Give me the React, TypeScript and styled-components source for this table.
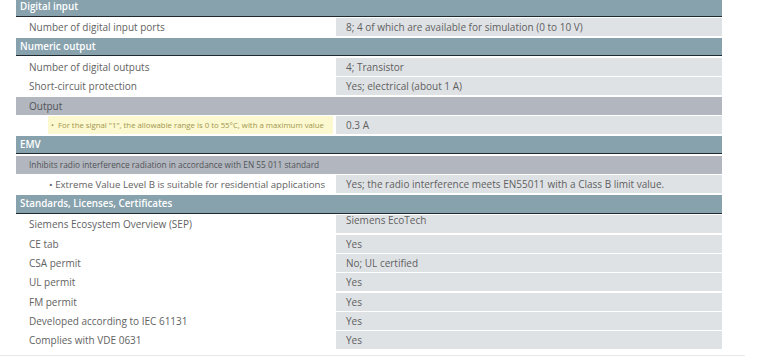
import React from "react";
import styled, { createGlobalStyle } from "styled-components";

const GlobalStyle = createGlobalStyle`
  html, body {
    margin: 0;
    padding: 0;
    background: #ffffff;
    overflow: hidden;
  }
  body {
    font-family: "Open Sans", "Noto Sans", "Liberation Sans", sans-serif;
  }
`;

const Page = styled.div`
  width: 759px;
  height: 357px;
  overflow: hidden;
`;

const Sheet = styled.div`
  margin-top: -2px;
  padding-bottom: 6px;
  width: 745px;
  border-bottom: 1px solid #e6e8ea;
`;

const Table = styled.div`
  margin-left: 16px;
  width: 706px;
  display: flex;
  flex-direction: column;
`;

const SectionHeader = styled.div<{ $first?: boolean }>`
  height: 17.5px;
  margin-top: ${(p) => (p.$first ? "0" : "2px")};
  background: #87a2ad;
  border-bottom: 1px solid #1f2a30;
  color: #ffffff;
  font-size: 9.8px;
  font-weight: 600;
  display: flex;
  align-items: center;
  padding-left: 4px;
  white-space: nowrap;
`;

const Row = styled.div`
  display: grid;
  grid-template-columns: 320px 386px;
  height: 18px;
  margin-top: 1.4px;
`;

const Label = styled.div`
  display: flex;
  align-items: center;
  padding-left: 13px;
  font-size: 10px;
  color: #626262;
  background: #ffffff;
  white-space: nowrap;
  overflow: hidden;
`;

const Value = styled.div<{ $top?: boolean }>`
  display: flex;
  align-items: ${(p) => (p.$top ? "flex-start" : "center")};
  padding-left: 10px;
  font-size: 10px;
  color: #606060;
  background: #dfe2e5;
  white-space: nowrap;
  line-height: ${(p) => (p.$top ? "10px" : "normal")};
`;

const SubHeader = styled.div<{ $small?: boolean }>`
  height: 18px;
  margin-top: 1.4px;
  background: #b2b6be;
  display: flex;
  align-items: center;
  padding-left: 13px;
  font-size: ${(p) => (p.$small ? "8.3px" : "10px")};
  color: #505459;
  white-space: nowrap;
`;

const NoteLabel = styled.div`
  display: flex;
  align-items: stretch;
  padding-left: 32px;
  background: #ffffff;
`;

const Note = styled.span`
  display: flex;
  align-items: center;
  width: 285px;
  box-sizing: border-box;
  padding-left: 3px;
  background: #fcf8d0;
  color: #a0974e;
  font-size: 7.8px;
  white-space: nowrap;
  overflow: hidden;
`;

const Bullet = styled.span`
  margin-right: 4px;
`;

const BulletLabel = styled(Label)`
  padding-left: 33px;
  font-size: 9.7px;
`;

type Item = { label: string; value: string; top?: boolean };

const standards: Item[] = [
  { label: "Siemens Ecosystem Overview (SEP)", value: "Siemens EcoTech", top: true },
  { label: "CE tab", value: "Yes" },
  { label: "CSA permit", value: "No; UL certified" },
  { label: "UL permit", value: "Yes" },
  { label: "FM permit", value: "Yes" },
  { label: "Developed according to IEC 61131", value: "Yes" },
  { label: "Complies with VDE 0631", value: "Yes" },
];

const SpecRow = ({ label, value, top }: Item) => (
  <Row>
    <Label>{label}</Label>
    <Value $top={top}>{value}</Value>
  </Row>
);

export default function App() {
  return (
    <Page>
      <GlobalStyle />
      <Sheet>
        <Table>
          <SectionHeader $first>Digital input</SectionHeader>
          <SpecRow
            label="Number of digital input ports"
            value="8; 4 of which are available for simulation (0 to 10 V)"
          />

          <SectionHeader>Numeric output</SectionHeader>
          <SpecRow label="Number of digital outputs" value="4; Transistor" />
          <SpecRow label="Short-circuit protection" value="Yes; electrical (about 1 A)" />
          <SubHeader>Output</SubHeader>
          <Row>
            <NoteLabel>
              <Note>
                <Bullet>•</Bullet>For the signal "1", the allowable range is 0 to 55°C, with a maximum value
              </Note>
            </NoteLabel>
            <Value>0.3 A</Value>
          </Row>

          <SectionHeader>EMV</SectionHeader>
          <SubHeader $small>
            Inhibits radio interference radiation in accordance with EN 55 011 standard
          </SubHeader>
          <Row>
            <BulletLabel>• Extreme Value Level B is suitable for residential applications</BulletLabel>
            <Value>Yes; the radio interference meets EN55011 with a Class B limit value.</Value>
          </Row>

          <SectionHeader>Standards, Licenses, Certificates</SectionHeader>
          {standards.map((s) => (
            <SpecRow key={s.label} {...s} />
          ))}
        </Table>
      </Sheet>
    </Page>
  );
}
